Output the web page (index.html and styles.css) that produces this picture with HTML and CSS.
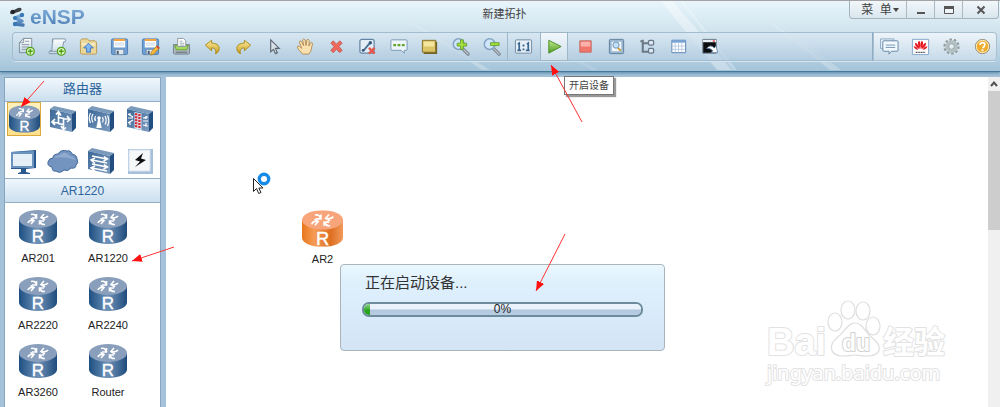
FILE: index.html
```html
<!DOCTYPE html>
<html lang="zh-CN">
<head>
<meta charset="utf-8">
<title>eNSP</title>
<link rel="stylesheet" href="styles.css">
</head>
<body>
<svg class="defs" aria-hidden="true">
  <defs>
    <linearGradient id="gBlue"><stop offset="0" stop-color="#1d4f82"/><stop offset=".5" stop-color="#6f92b8"/><stop offset="1" stop-color="#1f4c7c"/></linearGradient>
    <linearGradient id="gOrange"><stop offset="0" stop-color="#e8761c"/><stop offset=".3" stop-color="#f59b55"/><stop offset=".7" stop-color="#dd6f22"/><stop offset="1" stop-color="#f29a5a"/></linearGradient>
    <linearGradient id="gFront" x2="1" y2="1"><stop offset="0" stop-color="#3b6797"/><stop offset="1" stop-color="#7d9cc0"/></linearGradient>
    <linearGradient id="gPaper" x2="0" y2="1"><stop offset="0" stop-color="#fff"/><stop offset="1" stop-color="#c4d8e6"/></linearGradient>
    <linearGradient id="gGreen" x2="0" y2="1"><stop offset="0" stop-color="#c3ea8e"/><stop offset="1" stop-color="#4c9c1f"/></linearGradient>
    <linearGradient id="gGold" x2="0" y2="1"><stop offset="0" stop-color="#fdf0a0"/><stop offset="1" stop-color="#c99a1c"/></linearGradient>
    <linearGradient id="gLogo" x2="0" y2="1"><stop offset="0" stop-color="#7fb0da"/><stop offset="1" stop-color="#4577b0"/></linearGradient>
    <symbol id="arrows" viewBox="0 0 38 18">
      <g fill="none" stroke="#fff" stroke-width="1.600">
        <path d="M12 4.500q4-1 5 2.500M13 8h4.500V4"/>
        <path d="M29 6q-2 2.500-6 1.500M25 4l-3 3.500 4 2.500"/>
        <path d="M9 13q1-3 5-2.500M11.500 8.500l3.500 2-3 3.500"/>
        <path d="M26 14.500q-4 .5-5-3M20.500 14.500V11H25"/>
      </g>
    </symbol>
    <symbol id="router" viewBox="0 0 38 34">
      <path fill="url(#gBlue)" d="M0 9v16.500C0 30 8 34 19 34s19-4 19-8.500V9z"/>
      <ellipse cx="19" cy="9" rx="19" ry="9" fill="#8a9fbc"/>
      <use href="#arrows" width="38" height="18"/>
      <text x="19" y="32" class="r-letter">R</text>
    </symbol>
    <symbol id="routerHot" viewBox="0 0 38 34">
      <path fill="url(#gOrange)" d="M0 9v16.500C0 30 8 34 19 34s19-4 19-8.500V9z"/>
      <ellipse cx="19" cy="9" rx="19" ry="9" fill="#f9a57c"/>
      <use href="#arrows" width="38" height="18"/>
      <text x="19" y="32" class="r-letter">R</text>
    </symbol>
    <symbol id="box" viewBox="0 0 28 28">
      <path fill="#7a9abc" d="M1 4l4-3 22 5-4 3z"/>
      <path fill="#234f80" d="M23 9l4-3v17l-4 4z"/>
      <path fill="url(#gFront)" d="M1 4l22 5v18L1 22z"/>
    </symbol>
    <symbol id="plus" viewBox="0 0 10 10"><circle cx="5" cy="5" r="4.200" fill="#d9f3b8" stroke="#4fa01c" stroke-width="1.300"/><path d="M5 2.500v5M2.500 5h5" stroke="#4fa01c" stroke-width="1.500"/></symbol>
    <symbol id="floppy" viewBox="0 0 20 20"><rect x="1.500" y="2" width="17" height="16.500" rx="1.500" fill="#6f9fd2" stroke="#4f7fb5"/><path fill="#fff" d="M4 3h12v8H4z"/><path fill="#f5a442" d="M4 2h12v2.200H4z"/><path stroke="#c5d4e2" d="M5 6.500h10M5 8.500h10"/><path fill="#dfe6ec" stroke="#5e7d9c" stroke-width=".7" d="M5.500 13h9v5.500h-9z"/><path fill="#4d6278" d="M7 14.500h2.200V18H7z"/></symbol>
    <symbol id="lens" viewBox="0 0 20 20"><path d="M12 12l6 6" stroke="#77828d" stroke-width="3.400" stroke-linecap="round"/><path d="M12 12l6 6" stroke="#c3cad0" stroke-width="1.400" stroke-linecap="round"/><circle cx="8" cy="7.500" r="5.600" fill="#cfe5fa" stroke="#86a4c4" stroke-width="1.600"/></symbol>
    <marker id="head" markerUnits="userSpaceOnUse" markerWidth="12" markerHeight="8" refX="10" refY="4" orient="auto"><path fill="#f11" d="M0 0l10 4-10 4z"/></marker>
  </defs>
</svg>

<div class="app">
  <header class="header">
    <svg class="streaks" viewBox="0 0 1000 71" preserveAspectRatio="none" aria-hidden="true">
      <path fill="#fff" opacity=".35" d="M661 0h11l60 70h-15z"/>
      <path fill="#fff" opacity=".25" d="M680 0h3l54 70h-4zM765 12l76 58h-3zM758 12l72 58h8zM400 14l90 56h-8z"/>
      <path fill="#fff" opacity=".13" d="M500 18l98 52h-6z"/>
    </svg>
    <div class="titlebar">
      <div class="logo">
        <svg width="19" height="20" viewBox="0 0 19 20" aria-hidden="true"><path fill="#3e4247" d="M0 5q1-3 4-2l4-2q3-1 3.500 1T8 5L5 6Q0 9 0 5"/><circle cx="3" cy="5" r="2" fill="#202428"/><path fill="none" stroke="url(#gLogo)" stroke-width="3.400" stroke-linecap="round" stroke-linejoin="round" d="M12 8l-7 3 7 3-7 3 8 1"/><circle cx="12" cy="8" r="2.200" fill="#3979b7"/><circle cx="5" cy="11" r="2" fill="#3979b7"/><circle cx="5" cy="17" r="2.200" fill="#3979b7"/></svg>
        <span class="logo-text">eNSP</span>
      </div>
      <h1 class="title">新建拓扑</h1>
      <div class="window-controls">
        <button class="menu" type="button">菜&nbsp; 单<svg width="6" height="4" viewBox="0 0 6 4" aria-hidden="true"><path fill="#444" d="M0 0h6L3 4z"/></svg></button>
        <button class="win" type="button" aria-label="最小化"><svg width="12" height="12" viewBox="0 0 12 12"><path fill="#555" d="M2 8h8v2H2z"/></svg></button>
        <button class="win" type="button" aria-label="最大化"><svg width="12" height="12" viewBox="0 0 12 12"><path fill="#eef4f8" stroke="#555" d="M1.500 2.500h9v7h-9z"/><path fill="#555" d="M1 2h10v3H1z"/></svg></button>
        <button class="win close" type="button" aria-label="关闭"><svg width="12" height="12" viewBox="0 0 12 12"><path stroke="#555" stroke-width="2" d="M2.500 2.500l7 7M9.500 2.500l-7 7"/></svg></button>
      </div>
    </div>

    <div class="toolbar">
      <div class="group">
        <button type="button" class="tool" aria-label="新建"><svg viewBox="0 0 20 20"><path fill="url(#gPaper)" stroke="#7b8a98" d="M7 1.500h8.500v15h-13V6z"/><path fill="#dde4ea" stroke="#7b8a98" stroke-width=".8" d="M7 1.500V6H2.500z"/><path stroke="#8997a5" d="M8.500 4.500H13M5 8h8M5 10.500h8M5 13h5"/><use href="#plus" x="9" y="10" width="10" height="10"/></svg></button>
        <button type="button" class="tool" aria-label="新建试卷"><svg viewBox="0 0 20 20"><path fill="url(#gPaper)" stroke="#7d95a8" d="M5 2h13q1.500 1 0 3h-1.500L14 17.500H1.500q-1.500-1 .5-3h2z"/><path fill="none" stroke="#7d95a8" d="M5 2q-1.500 1 .5 3M2 15h11"/><use href="#plus" x="9" y="10" width="10" height="10"/></svg></button>
        <button type="button" class="tool" aria-label="打开"><svg viewBox="0 0 20 20"><path fill="#ecd79a" stroke="#b99b55" d="M1.500 5V3.500L3 2h6l1.500 2H17l1.500 1.500V17l-1 1h-15l-1-1z"/><path fill="#f9ecc2" d="M3 6.500h14V9H3z"/><path fill="#83b8f2" stroke="#3b78c4" d="M10 6.500l5 5h-3V16H8v-4.500H5z"/></svg></button>
        <button type="button" class="tool" aria-label="保存"><svg viewBox="0 0 20 20"><use href="#floppy" width="20" height="20"/></svg></button>
        <button type="button" class="tool" aria-label="另存为"><svg viewBox="0 0 20 20"><use href="#floppy" width="20" height="20"/><path fill="#f7b93c" stroke="#a87318" stroke-width=".7" d="M17 9l2.500 2.500L13.500 18l-3.500 1 1-3.500z"/><path fill="#d2463c" d="M17 9l2.500 2.500-1.200 1.200-2.500-2.500z"/></svg></button>
        <button type="button" class="tool" aria-label="打印"><svg viewBox="0 0 20 20"><path fill="#aeb9c2" stroke="#727f8a" d="M1.500 8h17v9l-1 1h-15l-1-1z"/><path fill="#a6d960" stroke="#69a52a" d="M3 9h14l-1.500 4.500h-11z"/><path fill="#fff" stroke="#8d989f" d="M6 1.500h6l2.500 2.500v6H6z"/><path stroke="#9aa" d="M8 4.500h3M8 6.500h5M8 8.500h5"/><path fill="#59656f" d="M4 15.500h12v1H4z"/></svg></button>
        <button type="button" class="tool" aria-label="撤销"><svg viewBox="0 0 20 20"><path fill="url(#gGold)" stroke="#a98a1d" d="M2.500 8.500L9 3.500v3c5 0 8 2 8 5.500 0 3-1.500 5-4 5.500 1.500-4-.5-6-4-6v3z"/></svg></button>
        <button type="button" class="tool" aria-label="恢复"><svg viewBox="0 0 20 20"><path fill="url(#gGold)" stroke="#a98a1d" d="M17.500 8.500L11 3.500v3c-5 0-8 2-8 5.500 0 3 1.500 5 4 5.500-1.500-4 .5-6 4-6v3z"/></svg></button>
        <button type="button" class="tool" aria-label="选择"><svg viewBox="0 0 20 20"><path fill="#d9e2e8" stroke="#5d6670" stroke-width="1.200" d="M6 3v12.500l3-2.500 2 4.500 2-1-2-4.500h4z"/></svg></button>
        <button type="button" class="tool" aria-label="拖动"><svg viewBox="0 0 20 20"><path fill="#fae0ae" stroke="#a97c3e" stroke-width=".8" d="M7 18L2.500 13Q.5 10 2 9.500T6 12L3.500 5.500q0-2 2-1L8 9 7 3q1-2 2.500 0l1 6 1-6q1.500-1.500 2.500.5L13.500 9.500l2-3.500q2-.5 2 1l-2 8-2 3z"/></svg></button>
        <button type="button" class="tool" aria-label="删除"><svg viewBox="0 0 20 20"><path fill="#f0685c" stroke="#b95048" stroke-width=".8" d="M4 6.500L6.500 4l3.500 3.500L13.500 4 16 6.500 12.500 10l3.500 4-2.500 2.500L10 13l-3.500 3.500L4 14l3.500-4z"/></svg></button>
        <button type="button" class="tool" aria-label="删除连线"><svg viewBox="0 0 20 20"><rect x="2" y="2.500" width="15" height="14.500" rx="2" fill="#e4edf5" stroke="#6484a5" stroke-width="1.300"/><path fill="none" stroke="#4b7095" stroke-width="2" d="M4.500 14.500l2-1 5-6 2-2"/><circle cx="13" cy="6" r="1.800" fill="#34587d"/><circle cx="5.500" cy="14" r="1.500" fill="#34587d"/><path fill="none" stroke="#e5584e" stroke-width="2.600" d="M11.500 11.500l6 6M17.500 11.500l-6 6"/></svg></button>
        <button type="button" class="tool" aria-label="文本"><svg viewBox="0 0 20 20"><path fill="#eef6fb" stroke="#7895b2" d="M3 3h15q1 0 1 1v9q0 1-1 1h-2v3l-3-3H3q-1 0-1-1V4q0-1 1-1z"/><path stroke="#65a52a" stroke-width="2.400" stroke-dasharray="3 1.500" d="M4.500 8.500h12"/></svg></button>
        <button type="button" class="tool" aria-label="矩形"><svg viewBox="0 0 20 20"><path fill="#716125" d="M3 5h15v13H4z"/><path fill="#dcc566" stroke="#84702a" d="M2.500 3.500h14v12.500h-14z"/><path fill="#fff3b8" opacity=".7" d="M4 5h11v5H4z"/></svg></button>
        <button type="button" class="tool" aria-label="放大"><svg viewBox="0 0 20 20"><use href="#lens" width="20" height="20"/><path fill="#a5e03b" stroke="#569322" stroke-width=".8" d="M10 3h3v3.500h3.500v3H13V13h-3V9.500H6.500v-3H10z"/></svg></button>
        <button type="button" class="tool" aria-label="缩小"><svg viewBox="0 0 20 20"><use href="#lens" width="20" height="20"/><path fill="#a5e03b" stroke="#569322" stroke-width=".8" d="M9 6h9v3H9z"/></svg></button>
      </div>
      <div class="group main">
        <button type="button" class="tool" aria-label="重置缩放"><svg viewBox="0 0 20 20"><rect x="1.500" y="3" width="17" height="14" rx="1" fill="#e8f0f7" stroke="#7087a0"/><path fill="none" stroke="#39668f" stroke-width="1.800" d="M4 7.500l1.500-1V14M3.500 14h4M13.500 7.500l1.500-1V14M12.500 14h4"/><path fill="#39668f" d="M9 8h2v2H9zM9 12h2v2H9z"/></svg></button>
        <button type="button" class="tool active" aria-label="开启设备"><svg viewBox="0 0 20 20"><path fill="url(#gGreen)" stroke="#4a8c25" d="M4 3.500l13 6.500-13 7z"/></svg></button>
        <button type="button" class="tool" aria-label="停止设备"><svg viewBox="0 0 20 20"><path fill="#f0756a" stroke="#c46a64" d="M4 4h12v12H4z"/><path fill="#fbb1aa" d="M5 5h10v5H5z"/></svg></button>
        <button type="button" class="tool" aria-label="数据抓包"><svg viewBox="0 0 20 20"><rect x="2.500" y="2.500" width="15" height="15" rx="1" fill="#9bb8d2" stroke="#5e7c9c"/><path fill="#f2f7fb" d="M5 5h10v10H5z"/><path stroke="#c99b32" stroke-width="2" d="M11.500 11.500l3 3"/><circle cx="9.500" cy="8.500" r="3.300" fill="#bfe0fa" stroke="#7294b4"/></svg></button>
        <button type="button" class="tool" aria-label="拓扑树"><svg viewBox="0 0 20 20"><path fill="none" stroke="#6c7985" stroke-width="2.200" d="M5 3v12.500h6M5 6.500h6M2.500 4.500H5"/><rect x="11" y="3.500" width="5.500" height="5" rx="1.500" fill="#dbe6ee" stroke="#657789" stroke-width="1.300"/><rect x="11" y="12" width="5.500" height="5" rx="1.500" fill="#dbe6ee" stroke="#657789" stroke-width="1.300"/></svg></button>
        <button type="button" class="tool" aria-label="接口列表"><svg viewBox="0 0 20 20"><path fill="#fff" stroke="#5a83b3" d="M3 3.500h14.500v13H3z"/><path fill="#79a2d2" d="M3 3h14.500v3H3z"/><path stroke="#a9c2dd" stroke-width=".8" d="M3 9.500h14M3 13h14M6.500 6v10M10 6v10M13.500 6v10"/></svg></button>
        <button type="button" class="tool" aria-label="命令行"><svg viewBox="0 0 20 20"><path fill="#0b0d10" stroke="#6d7b88" d="M3 2.500h14v14.500H3z"/><path fill="#e8eef3" d="M3 3h14v2.500H3z"/><path fill="#d33" d="M13.500 3.500h2V5h-2z"/><path fill="#fff" stroke="#55779a" stroke-width=".8" d="M7 12q4-5 8-.5l2-2 1.500 7h-7l2-2q-3-3-6.500-2.500z"/></svg></button>
      </div>
      <div class="group side">
        <button type="button" class="tool" aria-label="论坛"><svg viewBox="0 0 20 20"><path fill="#e1eef7" stroke="#8fabc5" d="M.5 2h14v10h-14z"/><path fill="#f2f9fd" stroke="#6485a7" d="M4 4h14q1 0 1 1v9q0 1-1 1h-6l-2.500 3v-3H4q-1 0-1-1V5q0-1 1-1z"/><path stroke="#7393b4" d="M6 8.500h10M6 11h10"/></svg></button>
        <button type="button" class="tool" aria-label="官网"><svg viewBox="0 0 20 20"><path fill="#fff" stroke="#84a6cc" d="M1.500 2.500h17v16h-17z"/><g fill="#e8161e"><path d="M9.600 13Q5.500 6 8.500 4q2 1 1.100 9M10.400 13Q14.500 6 11.500 4q-2 1-1.100 9M8.800 13Q3 9 4.500 6 8 7 8.800 13M11.200 13Q17 9 15.500 6 12 7 11.200 13M8 13.500Q3 13 2.800 9.500 6 10 8 13.500M12 13.500q5-.5 5.200-4-3.200.5-5.200 4"/></g><path stroke="#555" stroke-width="1.200" stroke-dasharray="1.300 .5" d="M5 16.200h10"/></svg></button>
        <button type="button" class="tool" aria-label="设置"><svg viewBox="0 0 20 20"><circle cx="10" cy="10" r="7.300" fill="none" stroke="#8d9b9e" stroke-width="2.500" stroke-dasharray="2.600 1.980"/><circle cx="10" cy="10" r="5" fill="none" stroke="#b4c0c2" stroke-width="3.400"/><circle cx="10" cy="10" r="3" fill="#e4eff3" stroke="#87979b"/></svg></button>
        <button type="button" class="tool" aria-label="帮助"><svg viewBox="0 0 20 20"><circle cx="10" cy="10" r="7.500" fill="#f0ac2c" stroke="#8d8d85"/><circle cx="10" cy="10" r="6.500" fill="none" stroke="#fff0c7"/><path fill="none" stroke="#fff" stroke-width="1.800" d="M7.500 8.500q0-2.500 2.500-2.500t2.500 2-2.500 3.500"/><path fill="#fff" d="M9 13h2v2H9z"/></svg></button>
      </div>
    </div>
  </header>

  <div class="body">
    <aside class="sidebar">
      <h2 class="panel-title">路由器</h2>
      <div class="categories">
        <button type="button" class="cat selected" aria-label="路由器"><svg viewBox="0 0 38 34" class="cat-router"><use href="#router" width="38" height="34"/></svg></button>
        <button type="button" class="cat" aria-label="交换机"><svg viewBox="0 0 28 28"><use href="#box" width="28" height="28"/><path fill="none" stroke="#fff" stroke-width="1.600" d="M9.500 12.500l5 1v6l-5-1zM9.500 13V7.500M7 9.500l2.500-3 2.500 4M14.500 14h6M18 11l3 3.500-3 2.500M14.500 19v5M12 21l2.500 3.500 2.500-2M9.500 18l-6-1M6 14l-3 3 3 3"/></svg></button>
        <button type="button" class="cat" aria-label="无线局域网"><svg viewBox="0 0 28 28"><use href="#box" width="28" height="28"/><path fill="none" stroke="#fff" stroke-width="1.200" d="M8.500 11q-1.500 2.500 0 5M6 9q-2.500 4 0 8.500M3.500 8q-2.500 5 0 10M15.500 12q1.500 3 0 5.500M18 11q2.500 4.500 0 8.500M20.500 10.500q2.500 5 0 10.500"/><path fill="#fff" d="M11.300 13h1.400l2 10H9.300z"/><circle cx="12" cy="13" r="1.800" fill="#fff"/></svg></button>
        <button type="button" class="cat" aria-label="防火墙"><svg viewBox="0 0 28 28"><use href="#box" width="28" height="28"/><path fill="#d9eaf5" d="M8.500 7l7 1.500V25l-7-1.500z"/><path stroke="#d92d38" stroke-width="2" stroke-dasharray="2.500 .8" d="M9 9l6.500 1.500M9 12l6.500 1.500M9 15l6.500 1.500M9 18l6.500 1.500M9 21l6.500 1.500"/><path stroke="#fff" stroke-width="1.200" d="M2 9l5 3M2 13h5M2 18l5-3M4 8v3M4 16v4M17 13l5-1M17 16h5M17 20l5 1M20 11v3M20 18v4"/></svg></button>
        <button type="button" class="cat" aria-label="终端"><svg viewBox="0 0 28 28"><path fill="#28588d" d="M1 5l25-2v18l-10 1v3l4 1v1H8v-1l3-1v-3H1z"/><path fill="#6a93bf" d="M1 5l23-1v17H1z"/><path fill="#e4eef6" d="M3 7h19v12H3z"/></svg></button>
        <button type="button" class="cat" aria-label="其他设备"><svg viewBox="0 0 32 28" class="wide"><path fill="#7494c0" stroke="#426a9d" d="M5 20q-5-1-4-5t5-4q0-4 5-4 3-5 9-3 4-1 5 3 5 1 5 5 2 4-1 6 0 4-5 3-3 4-7 2-4 4-8 1-4 1-4-4z"/><path fill="#a2b8d8" opacity=".6" d="M7 11q2-3 6-3 5-5 10 1 5 1 5 4-10-4-21-2z"/></svg></button>
        <button type="button" class="cat" aria-label="设备连线"><svg viewBox="0 0 28 28"><use href="#box" width="28" height="28"/><path fill="none" stroke="#fff" stroke-width="1.500" d="M5 9l15 3M17 9.500l3.500 2.500-4 2M20 16L5 13M8 11l-4 2 4 3.500M5 17l15 3M17 17.500l3.500 2.500-4 2M20 24L5 21M8 19l-4 2 4 3"/></svg></button>
        <button type="button" class="cat" aria-label="自动连线"><svg viewBox="0 0 28 28"><path fill="#a6bfdc" d="M2 2h25v25H2z"/><path fill="#f5f7f8" stroke="#d8e2ec" d="M3 3h21v21H3z"/><path fill="#111" d="M17 6l-8 7 5 1.500-5 5.500 11-7-5-1.500z"/></svg></button>
      </div>
      <h2 class="panel-title sub">AR1220</h2>
      <ul class="devices">
        <li><svg viewBox="0 0 38 34"><use href="#router"/></svg><span>AR201</span></li>
        <li><svg viewBox="0 0 38 34"><use href="#router"/></svg><span>AR1220</span></li>
        <li><svg viewBox="0 0 38 34"><use href="#router"/></svg><span>AR2220</span></li>
        <li><svg viewBox="0 0 38 34"><use href="#router"/></svg><span>AR2240</span></li>
        <li><svg viewBox="0 0 38 34"><use href="#router"/></svg><span>AR3260</span></li>
        <li><svg viewBox="0 0 38 34"><use href="#router"/></svg><span>Router</span></li>
      </ul>
    </aside>

    <main class="canvas">
      <div class="node"><svg viewBox="0 0 38 34"><use href="#routerHot"/></svg><span>AR2</span></div>
      <svg class="pointer" width="24" height="24" viewBox="0 0 24 24" aria-hidden="true"><circle cx="13" cy="7" r="4.700" fill="#fff" stroke="#168be8" stroke-width="3.400"/><path fill="#fff" stroke="#222" d="M2.500 6.500v13l3-3 2.200 5 2.300-1-2.200-4.500H12z"/></svg>
      <svg class="watermark" width="190" height="96" viewBox="0 0 190 96" aria-hidden="true">
        <g fill="#fff" stroke="#dedede" stroke-width="1.200">
          <ellipse cx="77" cy="21" rx="7" ry="9"/><ellipse cx="90" cy="9" rx="7" ry="9"/><ellipse cx="105" cy="10" rx="7" ry="9"/><ellipse cx="115" cy="25" rx="7" ry="9"/>
          <path d="M97 22c7 0 10 8 15 13 16 12 9 20-3 20-6 0-9-1-12-1s-6 1-12 1c-12 0-17-10-4-20 6-5 9-13 16-13z"/>
        </g>
        <text class="wm-bai" x="9" y="54">Bai</text>
        <text class="wm-du" x="84" y="50">du</text>
        <text class="wm-cn" x="125" y="52">经验</text>
        <text class="wm-url" x="9" y="79">jingyan.baidu.com</text>
      </svg>
      <section class="dialog" aria-labelledby="dlg">
        <p class="dialog-text" id="dlg">正在启动设备...</p>
        <div class="progress">
          <progress value="2" max="100" aria-labelledby="dlg"></progress>
          <span class="percent">0%</span>
        </div>
      </section>
    </main>

    <div class="scrollbar" aria-hidden="true">
      <svg width="12" height="14" viewBox="0 0 12 14"><path fill="none" stroke="#505050" stroke-width="2" d="M3 9l3-3.500L9 9"/></svg>
      <div class="thumb"></div>
    </div>
  </div>

  <div class="tooltip" role="tooltip">开启设备</div>
  <svg class="marks" width="600" height="310" viewBox="0 0 600 310" aria-hidden="true">
    <g stroke="#f33" stroke-width="1">
      <path d="M44 81L21 107" marker-end="url(#head)"/>
      <path d="M582 122L551 65" marker-end="url(#head)"/>
      <path d="M565 234L536 291" marker-end="url(#head)"/>
      <path d="M174 247L132 261" marker-end="url(#head)"/>
    </g>
  </svg>
</div>
</body>
</html>
```

FILE: styles.css
```css
* { box-sizing: border-box; }

body {
  margin: 0;
  font-family: "Liberation Sans", "Noto Sans CJK SC", sans-serif;
  font-size: 11px;
  color: #222;
}

h1, h2, p, ul { margin: 0; padding: 0; font-weight: normal; }
ul { list-style: none; }
button { border: 0; padding: 0; background: none; font: inherit; color: inherit; }
svg { display: block; }

.defs { position: absolute; width: 0; height: 0; }

.r-letter {
  fill: #fff;
  stroke: #fff;
  stroke-width: 0.4px;
  font-family: "Liberation Sans", sans-serif;
  font-size: 17px;
  text-anchor: middle;
}

.app {
  position: relative;
  display: flex;
  flex-direction: column;
  height: 100vh;
  overflow: hidden;
  background: #a5c2da;
}

/* Header */
.header {
  position: relative;
  flex: none;
  padding: 0 3px 10px 12px;
  border-top: 1px solid #a3a3a8;
  border-bottom: 1px solid #47799a;
  background: linear-gradient(#e8f5fb, #cfe3ee 45%, #a4c4da);
  box-shadow: 0 1px 3px #5487a8;
}

.streaks { position: absolute; inset: 0; width: 100%; height: 100%; }

.titlebar {
  position: relative;
  display: grid;
  grid-template-columns: 1fr auto 1fr;
  align-items: start;
  height: 31px;
  margin: 0 -2px 0 -2px;
}

.logo { display: flex; align-items: center; gap: 1px; height: 31px; }

.logo-text {
  font-weight: bold;
  font-size: 21px;
  line-height: 24px;
  background: linear-gradient(#86b4dc, #4878b2);
  background-clip: text;
  color: transparent;
}

.title { padding-top: 5px; font-size: 11px; line-height: 16px; color: #444; }

.window-controls {
  display: flex;
  justify-self: end;
  height: 18px;
  border: 1px solid #a5b3be;
  border-top: 0;
  border-radius: 0 0 4px 4px;
  background: linear-gradient(#f2f7fa, #d9e6ee);
}

.menu {
  display: flex;
  align-items: center;
  justify-content: center;
  gap: 1px;
  width: 56px;
  padding-left: 4px;
  font-size: 12px;
  line-height: 16px;
  color: #444;
}

.win {
  display: flex;
  align-items: center;
  justify-content: center;
  width: 28px;
  border-left: 1px solid #a9b8c3;
}

.win.close { width: 36px; }

.toolbar {
  position: relative;
  display: flex;
  height: 29px;
  border-radius: 4px;
  background: linear-gradient(#dbe9f3cc, #b3cce0aa);
  box-shadow: inset 0 0 0 1px #a3bdd0, 0 1px 0 #d5e6f1;
}

.group { display: flex; gap: 3px; }
.group:first-child { padding-right: 2px; border-right: 1px solid #9db7ca; }
.main { flex: 1; padding-left: 1px; }

.side {
  padding: 0 1px 0 2px;
  border-left: 1px solid #8fabc1;
  border-radius: 0 4px 4px 0;
  background: linear-gradient(#eef5fa, #c5d9e8);
  box-shadow: inset 0 0 0 1px #a9c0d1;
}

.tool {
  display: flex;
  align-items: center;
  justify-content: center;
  width: 28px;
  height: 29px;
}

.tool > svg { width: 19px; height: 19px; }

.tool.active {
  border: 1px solid #9db6c8;
  background: linear-gradient(#f1f7fb, #cfe0ec);
}

/* Body */
.body {
  display: flex;
  flex: 1;
  min-height: 0;
  margin-top: 5px;
  padding-left: 4px;
}

.sidebar {
  flex: none;
  width: 157px;
  margin-right: 5px;
  border: 1px solid #86a5bf;
  border-bottom: 0;
  background: #fff;
}

.panel-title {
  height: 24px;
  border-bottom: 1px solid #93b0c8;
  background: linear-gradient(#f0f7fd, #cbdfee);
  font-size: 13px;
  line-height: 22px;
  text-align: center;
  color: #2d659b;
}

.panel-title.sub { height: 25px; border-top: 1px solid #93b0c8; font-size: 12px; line-height: 24px; }

.categories {
  display: grid;
  grid-template-columns: repeat(4, 34px);
  justify-content: space-between;
  row-gap: 8px;
  height: 76px;
  padding: 0 3px 0 2px;
}

.cat {
  display: flex;
  align-items: center;
  justify-content: center;
  height: 34px;
}

.cat > svg { width: 28px; height: 28px; }
.cat > svg.cat-router { width: 31px; height: 28px; }
.cat > svg.wide { width: 32px; }

.cat.selected {
  border: 1px solid #d9a93e;
  background: linear-gradient(#fff1bd, #ffe08a);
}

.devices {
  display: grid;
  grid-template-columns: 70px 70px;
  row-gap: 17px;
  margin-left: -2px;
  padding-top: 7px;
}

.devices li, .node {
  display: flex;
  flex-direction: column;
  align-items: center;
  gap: 6px;
  line-height: 16px;
}

.devices li { height: 50px; }
.devices svg { width: 38px; height: 34px; flex: none; }

.canvas { position: relative; flex: 1; background: #fff; }

.node { position: absolute; left: 136px; top: 133px; width: 41px; gap: 4px; }
.node svg { width: 41px; height: 37px; }

.pointer { position: absolute; left: 85px; top: 95px; }

.scrollbar { flex: none; width: 12px; background: #f0f0f0; }
.thumb { height: 139px; background: #cdcdcd; }

/* Start-up dialog */
.dialog {
  position: absolute;
  left: 174px;
  top: 187px;
  width: 325px;
  padding: 8px 21px 33px;
  border: 1px solid #a9b4bb;
  border-radius: 4px;
  background: linear-gradient(#eaf7fe, #dff0fd 20%, #d3e5f5);
}

.dialog-text { padding: 0 3px; font-size: 15px; line-height: 20px; color: #333; }

.progress {
  display: grid;
  align-items: center;
  justify-items: center;
  height: 15px;
  margin-top: 9px;
}

.progress > * { grid-area: 1 / 1; }
.percent { font-size: 12px; line-height: 15px; }

progress {
  appearance: none;
  width: 100%;
  height: 15px;
  border: 2px solid #6c8b9c;
  border-radius: 7px;
  overflow: hidden;
}

progress::-webkit-progress-bar { background: linear-gradient(#e9f2fa 45%, #b2c8df 55%, #b8cde2); }
progress::-webkit-progress-value { background: linear-gradient(#8fd58a, #28a51c 60%); }

/* Overlays */
.tooltip {
  position: absolute;
  left: 564px;
  top: 76px;
  padding: 0 4px;
  border: 1px solid #777;
  background: #fff;
  box-shadow: 2px 2px 1px #999;
  font-size: 10px;
  line-height: 17px;
  color: #444;
}

.marks { position: absolute; left: 0; top: 0; pointer-events: none; }

.watermark { position: absolute; right: 40px; bottom: 10px; overflow: visible; }

.watermark text {
  fill: #fff;
  stroke: #e2e2e2;
  stroke-width: 2px;
  paint-order: stroke;
  stroke-linejoin: round;
}

.watermark .wm-bai { font: bold 38px "Liberation Sans", sans-serif; }
.watermark .wm-du { font: bold 23px "Liberation Sans", sans-serif; stroke: #d2d2d2; }
.watermark .wm-cn { font: bold 31px "Noto Sans CJK SC", sans-serif; }
.watermark .wm-url { font: 20px "Noto Sans", sans-serif; }
```
